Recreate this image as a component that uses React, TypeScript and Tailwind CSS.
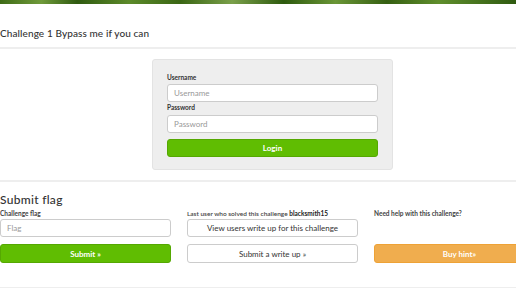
import React from "react";

export default function App() {
  return (
    <div className="w-[516px] h-[289px] overflow-hidden bg-white relative" style={{ fontFamily: "Lato, 'Open Sans', sans-serif" }}>
      <div className="h-[4px] w-full bg-[linear-gradient(90deg,#3e6b16_0%,#6f9a3a_8%,#2f5a10_15%,#5c8a2a_25%,#3a6614_35%,#7aa04a_45%,#2d5a0e_55%,#6a9636_65%,#355f12_75%,#5f8e2c_85%,#2f5a10_100%)]" />
      <div className="w-[545px]">
        <div className="h-[43px] flex items-end pb-[7px]">
          <h1 className="text-[10px] leading-[14px] text-[#333] font-medium tracking-[0.1px]">Challenge 1 Bypass me if you can</h1>
        </div>
        <div className="h-[2px] bg-[#eeeeee]" />
        <div className="pt-[10px]">
          <div className="mx-auto w-[241px] h-[111px] bg-[#eeeeee] border border-[#e3e3e3] rounded-[3px] px-[14px] pt-[13px]">
            <div className="text-[6.5px] leading-[10px] font-bold text-[#333]">Username</div>
            <div className="mt-[1px] h-[18px] bg-white border border-[#cccccc] rounded-[3px] flex items-center px-[6px] text-[8px] text-[#999]">Username</div>
            <div className="text-[6.5px] leading-[10px] font-bold text-[#333] mt-[1px]">Password</div>
            <div className="mt-[2px] h-[18px] bg-white border border-[#cccccc] rounded-[3px] flex items-center px-[6px] text-[8px] text-[#999]">Password</div>
            <div className="mt-[6px] h-[18px] bg-[#60bd02] border border-[#55a802] rounded-[3px] flex items-center justify-center text-[8px] font-bold text-white">Login</div>
          </div>
        </div>
        <div className="mt-[10px] h-[2px] bg-[#eeeeee]" />
        <div className="h-[26px] flex items-end">
          <h2 className="text-[12px] leading-[16px] text-[#333] font-medium tracking-[0.3px]">Submit flag</h2>
        </div>
        <div className="grid grid-cols-3 gap-x-[16px]">
          <div>
            <div className="h-[11px] flex items-center text-[6.5px] font-bold text-[#444]">Challenge flag</div>
            <div className="h-[18px] bg-white border border-[#cccccc] rounded-[3px] flex items-center px-[6px] text-[8px] text-[#999]">Flag</div>
            <div className="mt-[7px] h-[19px] bg-[#60bd02] border border-[#55a802] rounded-[3px] flex items-center justify-center text-[8px] font-bold text-white">Submit »</div>
          </div>
          <div>
            <div className="h-[11px] flex items-center text-[6.5px] text-[#444]">
              <span className="font-semibold">Last user who solved this challenge&nbsp;</span><span className="font-bold text-[#222]">blacksmith15</span>
            </div>
            <div className="h-[18px] bg-white border border-[#cccccc] rounded-[3px] flex items-center justify-center text-[8px] text-[#333]">View users write up for this challenge</div>
            <div className="mt-[7px] h-[19px] bg-white border border-[#cccccc] rounded-[3px] flex items-center justify-center text-[8px] text-[#333]">Submit a write up »</div>
          </div>
          <div>
            <div className="h-[11px] flex items-center text-[6.5px] font-bold text-[#444]">Need help with this challenge?</div>
            <div className="h-[18px]" />
            <div className="mt-[7px] h-[19px] bg-[#f0ad4e] border border-[#eea236] rounded-[3px] flex items-center justify-center text-[8px] font-bold text-white">Buy hint»</div>
          </div>
        </div>
        <div className="mt-[24px] h-[1px] bg-[#eeeeee]" />
      </div>
    </div>
  );
}
